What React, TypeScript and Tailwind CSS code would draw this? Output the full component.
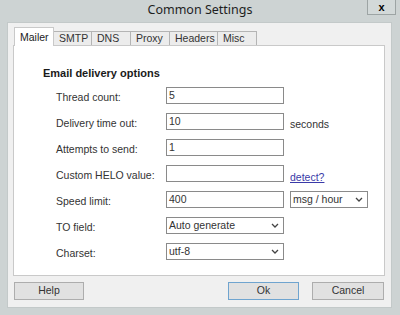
import React from "react";

const F = { fontFamily: '"Liberation Sans", Arial, sans-serif' };

function Chevron() {
  return (
    <svg width="8" height="5" viewBox="0 0 8 5" className="shrink-0">
      <path d="M1 1 L4 4 L7 1" fill="none" stroke="#444" strokeWidth="1.3" />
    </svg>
  );
}

function TextBox({ value }: { value: string }) {
  return (
    <div className="w-[118px] h-[17px] border border-[#8a8a8a] bg-white flex items-center pl-[2px] text-[10.5px] text-[#333] shrink-0">
      {value}
    </div>
  );
}

function Select({ value, w }: { value: string; w: string }) {
  return (
    <div className={`${w} h-[17px] border border-[#8a8a8a] bg-white flex items-center justify-between pl-[2px] pr-[4px] text-[10.5px] text-[#333] shrink-0`}>
      <span>{value}</span>
      <Chevron />
    </div>
  );
}

function Row({ label, children }: { label: string; children: React.ReactNode }) {
  return (
    <div className="h-[17px] flex items-center pl-[42px]">
      <div className="w-[110px] shrink-0 text-[10.5px] text-[#333] mt-[4px]">{label}</div>
      {children}
    </div>
  );
}

export default function App() {
  const tabs = [
    { n: "SMTP", w: "w-[38px]" },
    { n: "DNS", w: "w-[39px]" },
    { n: "Proxy", w: "w-[39px]" },
    { n: "Headers", w: "w-[48px]" },
    { n: "Misc", w: "w-[39px]" },
  ];
  return (
    <div className="w-[400px] h-[315px] bg-[#cdd3d3] flex flex-col" style={F}>
      <div className="h-[22px] relative flex items-center justify-center shrink-0">
        <span className="text-[12.5px] text-[#1e1e1e] pb-[1px]" style={{ fontFamily: '"Noto Sans", sans-serif' }}>
          Common Settings
        </span>
        <div className="absolute left-[367px] top-0 w-[29px] h-[15px] border border-t-0 border-[#9da4a4] bg-[#d3d9d9] flex items-center justify-center text-[11px] font-bold text-black leading-none">
          x
        </div>
      </div>
      <div className="flex-1 flex pl-[7px] pr-[8px] pb-[7px]">
        <div className="flex-1 bg-[#f0f0f0] border border-[#c3c9c9] flex flex-col pt-[4px] pl-[5px] pr-[6px] pb-[7px]">
          <div className="h-[18px] flex items-end pl-[1px] shrink-0">
            <div className="w-[40px] h-[19px] -mb-[1px] relative z-10 bg-white border border-b-0 border-[#c9c9c9] text-[10.5px] text-[#222] pl-[5px] pt-[2px]">
              Mailer
            </div>
            {tabs.map((t) => (
              <div
                key={t.n}
                className={`${t.w} h-[14px] bg-[#ececec] border-t border-r border-[#b4b4b4] text-[10.5px] text-[#333] pl-[5px] leading-[13px]`}
              >
                {t.n}
              </div>
            ))}
          </div>
          <div className="h-[231px] bg-white border border-[#c9c9c9] shrink-0 flex flex-col pt-[20px]">
            <div className="pl-[29px] h-[14px] text-[11px] font-bold text-[#1a1a1a] leading-[14px]">
              Email delivery options
            </div>
            <div className="mt-[7px] flex flex-col gap-[9px]">
              <Row label="Thread count:">
                <TextBox value="5" />
              </Row>
              <Row label="Delivery time out:">
                <TextBox value="10" />
                <span className="ml-[6px] mt-[7px] text-[10.5px] text-[#333]">seconds</span>
              </Row>
              <Row label="Attempts to send:">
                <TextBox value="1" />
              </Row>
              <Row label="Custom HELO value:">
                <TextBox value="" />
                <span className="ml-[6px] mt-[9px] text-[10.5px] text-[#3a3aa8] underline">detect?</span>
              </Row>
              <Row label="Speed limit:">
                <TextBox value="400" />
                <div className="ml-[6px]">
                  <Select value="msg / hour" w="w-[78px]" />
                </div>
              </Row>
              <Row label="TO field:">
                <Select value="Auto generate" w="w-[118px]" />
              </Row>
              <Row label="Charset:">
                <Select value="utf-8" w="w-[118px]" />
              </Row>
            </div>
          </div>
          <div className="mt-[6px] h-[18px] flex pl-[1px] pr-[1px] shrink-0">
            <div className="w-[70px] h-[18px] bg-[#e1e1e1] border border-[#adadad] flex items-center justify-center text-[10.5px] text-[#333]">
              Help
            </div>
            <div className="ml-auto w-[71px] h-[18px] bg-[#e1e1e1] border border-[#6fa4cf] flex items-center justify-center text-[10.5px] text-[#333]">
              Ok
            </div>
            <div className="ml-[13px] w-[72px] h-[18px] bg-[#e1e1e1] border border-[#adadad] flex items-center justify-center text-[10.5px] text-[#333]">
              Cancel
            </div>
          </div>
        </div>
      </div>
    </div>
  );
}
